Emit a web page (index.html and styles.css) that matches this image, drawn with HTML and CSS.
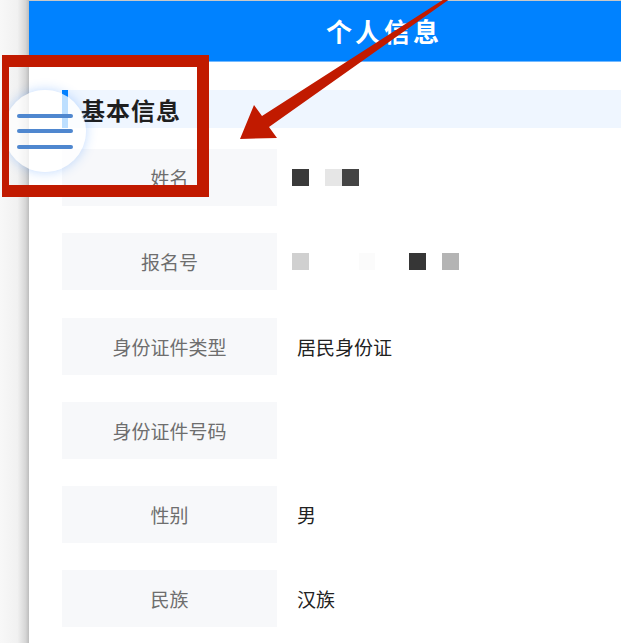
FILE: index.html
```html
<!DOCTYPE html>
<html lang="zh-CN">
<head>
<meta charset="utf-8">
<title>个人信息</title>
<link rel="stylesheet" href="styles.css">
</head>
<body>
<div class="shell">
  <div class="edge"></div>
  <main class="page">
    <header class="topbar"><h1 class="title">个人信息</h1></header>
    <section class="section">
      <h2 class="section-head">基本信息</h2>
      <div class="rows">
        <div class="row">
          <div class="label">姓名</div>
          <div class="value">
            <span class="mosaic">
              <i class="px p1"></i><i class="px"></i><i class="px p2"></i><i class="px p3"></i>
            </span>
          </div>
        </div>
        <div class="row">
          <div class="label">报名号</div>
          <div class="value">
            <span class="mosaic">
              <i class="px p4"></i><i class="px"></i><i class="px"></i><i class="px"></i><i class="px p5"></i><i class="px"></i><i class="px"></i><i class="px p6"></i><i class="px"></i><i class="px p7"></i>
            </span>
          </div>
        </div>
        <div class="row">
          <div class="label">身份证件类型</div>
          <div class="value"><span class="text">居民身份证</span></div>
        </div>
        <div class="row">
          <div class="label">身份证件号码</div>
          <div class="value"></div>
        </div>
        <div class="row">
          <div class="label">性别</div>
          <div class="value"><span class="text">男</span></div>
        </div>
        <div class="row">
          <div class="label">民族</div>
          <div class="value"><span class="text">汉族</span></div>
        </div>
      </div>
    </section>
  </main>
</div>

<div class="fab">
  <svg class="fab-icon" width="56" height="36" viewBox="0 0 56 36">
    <line x1="2" y1="2" x2="54" y2="2"/>
    <line x1="2" y1="17" x2="54" y2="17"/>
    <line x1="2" y1="33" x2="54" y2="33"/>
  </svg>
</div>

<div class="highlight"></div>

<svg class="arrow" width="621" height="643" viewBox="0 0 621 643">
  <polygon points="240,139 254,105 262,116 449,-4 454,-4 269,127 277,138"/>
</svg>
</body>
</html>
```

FILE: styles.css
```css
html, body {
  margin: 0;
  padding: 0;
}
body {
  width: 621px;
  height: 643px;
  overflow: hidden;
  position: relative;
  background: #ffffff;
  font-family: "Noto Sans CJK SC", "Noto Sans", sans-serif;
}
.shell {
  display: flex;
  min-height: 643px;
}
.edge {
  width: 29px;
  flex: none;
  background: linear-gradient(to right, #f8f8f8 0%, #f1f1f1 60%, #d6d6d6 88%, #bdbdbd 100%);
}
.page {
  flex: 1;
  background: #ffffff;
  border-top: 1px solid #c8c8c8;
}
.topbar {
  height: 60px;
  background: #0082ff;
  border-bottom: 1px solid #73b9ff;
  display: flex;
  align-items: center;
}
.title {
  margin: 0 0 0 297px;
  color: #ffffff;
  font-size: 26px;
  font-weight: 700;
  letter-spacing: 3px;
  line-height: 1;
}
.section {
  padding-left: 33px;
}
.section-head {
  margin: 28px 0 0 0;
  height: 38px;
  box-sizing: border-box;
  background: #eff6ff;
  border-left: 6px solid #0082ff;
  padding-left: 13px;
  display: flex;
  align-items: center;
  font-size: 24px;
  font-weight: 700;
  color: #1f1f1f;
  letter-spacing: 1px;
}
.rows {
  margin-top: 21px;
  display: flex;
  flex-direction: column;
  gap: 27.3px;
}
.row {
  display: flex;
  align-items: center;
  height: 57px;
}
.label {
  width: 215px;
  height: 57px;
  flex: none;
  background: #f7f8fa;
  display: flex;
  align-items: center;
  justify-content: center;
  font-size: 19px;
  color: #6e6e6e;
}
.value {
  margin-left: 15px;
  display: flex;
  align-items: center;
  font-size: 19px;
  color: #222222;
}
.text {
  padding-left: 5px;
}
.mosaic {
  display: flex;
}
.px {
  display: block;
  width: 16.7px;
  height: 17px;
  background: transparent;
}
.p1 { background: #3a3a3a; }
.p2 { background: #e6e6e6; }
.p3 { background: #444444; }
.p4 { background: #d0d0d0; }
.p5 { background: #fbfbfb; }
.p6 { background: #363636; }
.p7 { background: #b4b4b4; }

.fab {
  position: absolute;
  left: 4px;
  top: 90px;
  width: 82px;
  height: 82px;
  border-radius: 50%;
  background: rgba(255, 255, 255, 0.74);
  box-shadow: 0 0 12px rgba(40, 130, 255, 0.3);
  display: flex;
  align-items: center;
  justify-content: center;
}
.fab-icon line {
  stroke: #4f87cf;
  stroke-width: 4;
  stroke-linecap: round;
}
.fab-icon {
  margin-top: 2px;
  margin-left: -1px;
}
.highlight {
  position: absolute;
  left: 2px;
  top: 55px;
  width: 207px;
  height: 142px;
  box-sizing: border-box;
  border: 12px solid #c11a00;
  border-left-width: 7px;
}
.arrow {
  position: absolute;
  left: 0;
  top: 0;
  pointer-events: none;
}
.arrow polygon {
  fill: #c11a00;
}
```
